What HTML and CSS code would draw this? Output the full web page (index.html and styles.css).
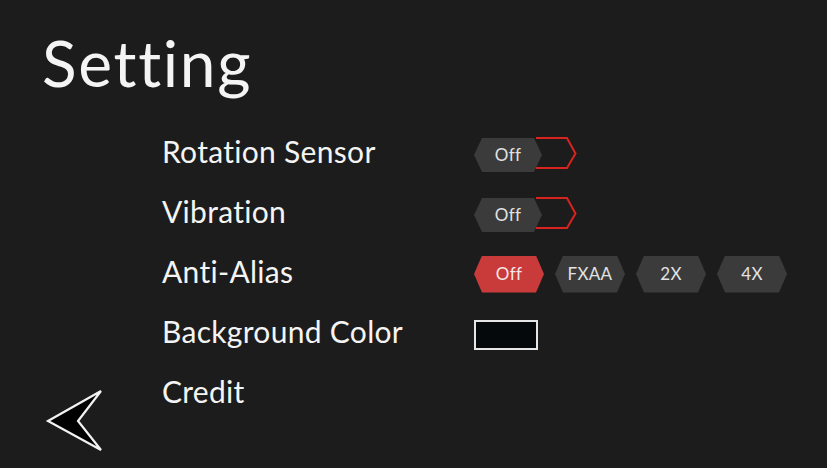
FILE: index.html
```html
<!DOCTYPE html>
<html lang="en">
<head>
<meta charset="utf-8">
<title>Setting</title>
<link rel="stylesheet" href="styles.css">
</head>
<body>
<div class="screen">
  <h1 class="title">Setting</h1>
  <div class="content">
    <div class="side">
      <button class="back" aria-label="Back">
        <svg width="60" height="66" viewBox="0 0 60 66">
          <polygon points="3,32 56,2 33,32 56,61" fill="#000" stroke="#f2f2f2" stroke-width="2.2" stroke-linejoin="miter"/>
        </svg>
      </button>
    </div>
    <div class="rows">
      <div class="row">
        <span class="label">Rotation Sensor</span>
        <div class="toggle">
          <span class="hex knob">Off</span>
          <svg class="track" width="42" height="34" viewBox="0 0 42 34">
            <polyline points="0,1 31,1 39.5,16.5 31,31 0,31" fill="none" stroke="#d8231f" stroke-width="2"/>
          </svg>
        </div>
      </div>
      <div class="row">
        <span class="label">Vibration</span>
        <div class="toggle">
          <span class="hex knob">Off</span>
          <svg class="track" width="42" height="34" viewBox="0 0 42 34">
            <polyline points="0,1 31,1 39.5,16.5 31,31 0,31" fill="none" stroke="#d8231f" stroke-width="2"/>
          </svg>
        </div>
      </div>
      <div class="row">
        <span class="label">Anti-Alias</span>
        <div class="chips">
          <span class="hex chip active">Off</span>
          <span class="hex chip">FXAA</span>
          <span class="hex chip">2X</span>
          <span class="hex chip">4X</span>
        </div>
      </div>
      <div class="row">
        <span class="label">Background Color</span>
        <span class="swatch"></span>
      </div>
      <div class="row">
        <span class="label">Credit</span>
      </div>
    </div>
  </div>
</div>
</body>
</html>
```

FILE: styles.css
```css
* { box-sizing: border-box; }
html, body {
  margin: 0;
  padding: 0;
  background: #1c1c1c;
}
body {
  width: 827px;
  height: 468px;
  overflow: hidden;
  font-family: "Lato", "Noto Sans", sans-serif;
  color: #f4f4f4;
}
.screen {
  display: flex;
  flex-direction: column;
  height: 100%;
  padding: 25px 0 0 0;
}
.title {
  margin: 0 0 0 42px;
  font-size: 64px;
  line-height: 76px;
  font-weight: 400;
  letter-spacing: 1.7px;
}
.content {
  display: flex;
  margin-top: 23px;
}
.side {
  width: 162px;
  display: flex;
  flex-direction: column;
  justify-content: flex-end;
  padding: 0 0 0 45px;
}
.back {
  display: block;
  width: 60px;
  height: 66px;
  padding: 0;
  margin: 0 0 -31px 0;
  border: 0;
  background: none;
}
.back svg { display: block; }
.rows {
  display: flex;
  flex-direction: column;
}
.row {
  display: flex;
  align-items: center;
  height: 60px;
}
.label {
  width: 312px;
  font-size: 30px;
  line-height: 36px;
  letter-spacing: 0.3px;
  padding-bottom: 6px;
  color: #f4f4f4;
}
.hex {
  display: flex;
  align-items: center;
  justify-content: center;
  padding-bottom: 2px;
  clip-path: polygon(0 50%, 8px 0, calc(100% - 8px) 0, 100% 50%, calc(100% - 8px) 100%, 8px 100%);
  background: #3b3b3b;
  color: #e2e2e2;
  font-size: 17px;
  letter-spacing: 0.3px;
}
.toggle {
  display: flex;
  align-items: center;
  margin-top: 2px;
}
.knob {
  width: 68px;
  height: 34px;
}
.track {
  display: block;
  margin-left: -6px;
  margin-top: -2px;
}
.chips {
  display: flex;
  gap: 11px;
}
.chip {
  width: 70px;
  height: 37px;
}
.chip.active {
  background: #c93a3a;
  color: #f4e8e8;
}
.swatch {
  display: block;
  width: 64px;
  height: 30px;
  margin-top: 2px;
  border: 2px solid #e6e6e6;
  background: #05090b;
}
```
